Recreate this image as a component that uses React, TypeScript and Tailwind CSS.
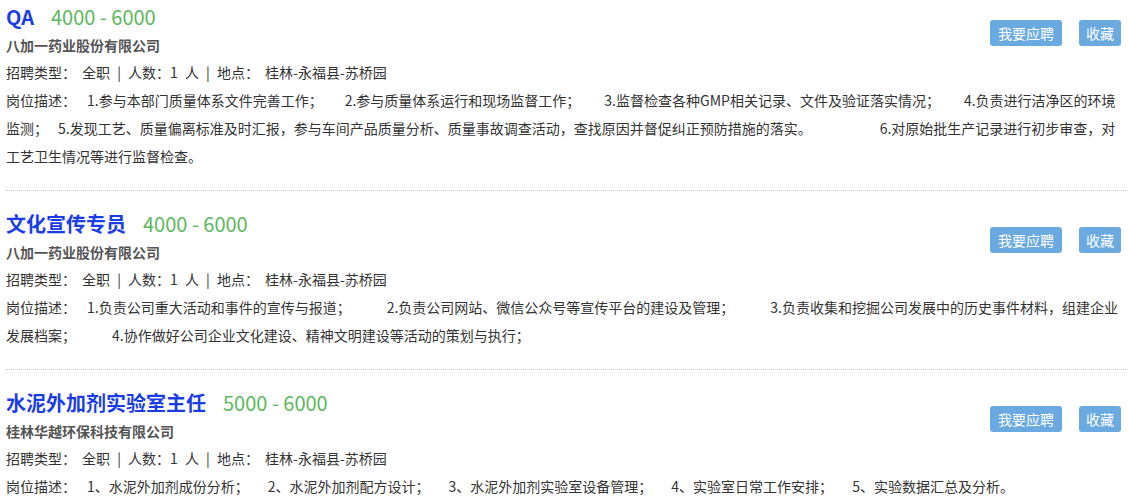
import React from 'react';

type Seg = { text: string; gap: string };

type Job = {
  title: string;
  salary: string;
  company: string;
  count: string;
  place: string;
  desc: Seg[];
};

const jobs: Job[] = [
  {
    title: 'QA',
    salary: '4000 - 6000',
    company: '八加一药业股份有限公司',
    count: '1 人',
    place: '桂林-永福县-苏桥园',
    desc: [
      { text: '1.参与本部门质量体系文件完善工作；', gap: 'mr-[22px]' },
      { text: '2.参与质量体系运行和现场监督工作；', gap: 'mr-[24px]' },
      { text: '3.监督检查各种GMP相关记录、文件及验证落实情况；', gap: 'mr-[24px]' },
      { text: '4.负责进行洁净区的环境监测；', gap: 'mr-[10px]' },
      { text: '5.发现工艺、质量偏离标准及时汇报，参与车间产品质量分析、质量事故调查活动，查找原因并督促纠正预防措施的落实。', gap: 'mr-[68px]' },
      { text: '6.对原始批生产记录进行初步审查，对工艺卫生情况等进行监督检查。', gap: '' },
    ],
  },
  {
    title: '文化宣传专员',
    salary: '4000 - 6000',
    company: '八加一药业股份有限公司',
    count: '1 人',
    place: '桂林-永福县-苏桥园',
    desc: [
      { text: '1.负责公司重大活动和事件的宣传与报道；', gap: 'mr-[36px]' },
      { text: '2.负责公司网站、微信公众号等宣传平台的建设及管理；', gap: 'mr-[36px]' },
      { text: '3.负责收集和挖掘公司发展中的历史事件材料，组建企业发展档案；', gap: 'mr-[36px]' },
      { text: '4.协作做好公司企业文化建设、精神文明建设等活动的策划与执行；', gap: '' },
    ],
  },
  {
    title: '水泥外加剂实验室主任',
    salary: '5000 - 6000',
    company: '桂林华越环保科技有限公司',
    count: '1 人',
    place: '桂林-永福县-苏桥园',
    desc: [
      { text: '1、水泥外加剂成份分析；', gap: 'mr-[19px]' },
      { text: '2、水泥外加剂配方设计；', gap: 'mr-[19px]' },
      { text: '3、水泥外加剂实验室设备管理；', gap: 'mr-[19px]' },
      { text: '4、实验室日常工作安排；', gap: 'mr-[19px]' },
      { text: '5、实验数据汇总及分析。', gap: '' },
    ],
  },
];

const JobItem: React.FC<{ job: Job; first?: boolean }> = ({ job, first }) => (
  <div className={`border-b border-dotted border-[#cfcfcf] pb-[20px] ${first ? 'pt-[2px]' : 'pt-[18px]'}`}>
    <div className="flex items-center justify-between">
      <div>
        <div className="flex items-baseline h-[30px] leading-[30px]">
          <span className="text-[20px] font-bold text-[#1a3de6]">{job.title}</span>
          <span className="ml-[17px] text-[20px] text-[#5cb85c]">{job.salary}</span>
        </div>
        <div className="text-[14px] leading-[26px] font-bold text-[#555]">{job.company}</div>
      </div>
      <div className="flex gap-[17px] pr-[7px] mt-[6px]">
        <button className="h-[26px] px-[8px] rounded-[3px] bg-[#6aaae0] text-white text-[14px]">我要应聘</button>
        <button className="h-[26px] px-[7px] rounded-[3px] bg-[#6aaae0] text-white text-[14px]">收藏</button>
      </div>
    </div>
    <div className="text-[14px] leading-[28px] text-[#333] [word-spacing:4px]">
      <span className="mr-[6px]">招聘类型：</span>全职 | 人数：{job.count} | 地点：<span className="ml-[6px]">{job.place}</span>
    </div>
    <div className="text-[14px] leading-[28px] text-[#333]">
      <span className="mr-[11px]">岗位描述：</span>
      {job.desc.map((s, i) => (
        <span key={i} className={s.gap}>
          {s.text}
        </span>
      ))}
    </div>
  </div>
);

export default function App() {
  return (
    <div
      className="w-[1129px] h-[496px] overflow-hidden bg-white pl-[6px] pr-[1px]"
      style={{ fontFamily: '"Noto Sans CJK SC", "Noto Sans", sans-serif' }}
    >
      {jobs.map((j, i) => (
        <JobItem key={i} job={j} first={i === 0} />
      ))}
    </div>
  );
}
